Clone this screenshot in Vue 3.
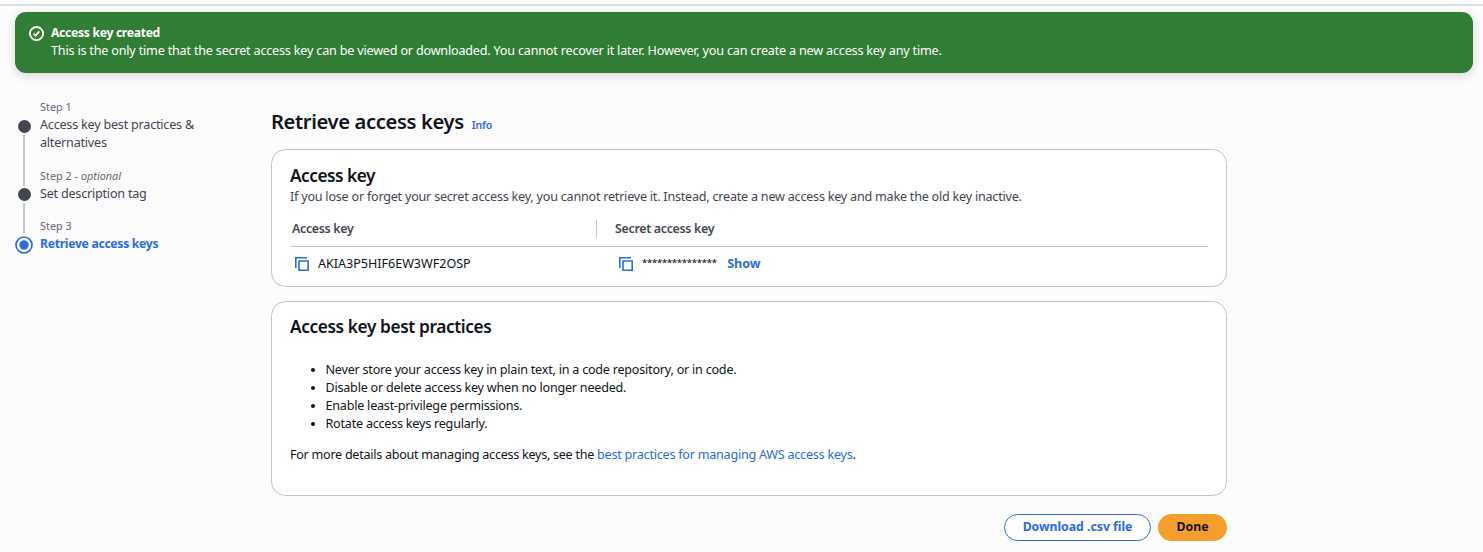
<script setup>
const steps = [
  { label: 'Step 1', title: 'Access key best practices & alternatives', state: 'done' },
  { label: 'Step 2', optional: 'optional', title: 'Set description tag', state: 'done' },
  { label: 'Step 3', title: 'Retrieve access keys', state: 'active' },
]
const practices = [
  'Never store your access key in plain text, in a code repository, or in code.',
  'Disable or delete access key when no longer needed.',
  'Enable least-privilege permissions.',
  'Rotate access keys regularly.',
]
</script>

<template>
  <div class="page">
    <div class="topbar"></div>
    <section class="flash">
      <svg class="flash-icon" viewBox="0 0 16 16" fill="none" stroke="#fff" stroke-width="2">
        <circle cx="8" cy="8" r="7" />
        <path d="M5 8.2l2.1 2.1L11 5.7" />
      </svg>
      <div>
        <div class="flash-title">Access key created</div>
        <div class="flash-text">This is the only time that the secret access key can be viewed or downloaded. You cannot recover it later. However, you can create a new access key any time.</div>
      </div>
    </section>

    <div class="layout">
      <nav class="steps">
        <div v-for="s in steps" :key="s.label" class="step" :class="s.state">
          <div class="rail">
            <svg v-if="s.state === 'active'" class="ring" viewBox="0 0 18 18">
              <circle cx="9" cy="9" r="8" fill="#fff" stroke="#2a6bdf" stroke-width="1.7" />
              <circle cx="9" cy="9" r="4.7" fill="#2a6bdf" />
            </svg>
            <span v-else class="dot"></span>
            <span v-if="s.state !== 'active'" class="line"></span>
          </div>
          <div class="step-body">
            <div class="step-label">{{ s.label }}<template v-if="s.optional"> - <i>{{ s.optional }}</i></template></div>
            <div class="step-title">{{ s.title }}</div>
          </div>
        </div>
      </nav>

      <main class="main">
        <header class="heading">
          <h1>Retrieve access keys</h1>
          <a class="info">Info</a>
        </header>

        <section class="card keys">
          <h2>Access key</h2>
          <p class="desc">If you lose or forget your secret access key, you cannot retrieve it. Instead, create a new access key and make the old key inactive.</p>
          <div class="row head">
            <div class="cell first">Access key</div>
            <div class="cell">Secret access key</div>
          </div>
          <div class="row body">
            <div class="cell first">
              <svg class="copy" viewBox="0 0 14 14" fill="none" stroke="#2a6bdf" stroke-width="1.6">
                <path d="M.8 11V.8H12" /><path d="M4 4h9.2v9.2H4z" />
              </svg>
              <span class="key">AKIA3P5HIF6EW3WF2OSP</span>
            </div>
            <div class="cell">
              <svg class="copy" viewBox="0 0 14 14" fill="none" stroke="#2a6bdf" stroke-width="1.6">
                <path d="M.8 11V.8H12" /><path d="M4 4h9.2v9.2H4z" />
              </svg>
              <span class="stars">***************</span>
              <a class="show">Show</a>
            </div>
          </div>
        </section>

        <section class="card practices">
          <h2>Access key best practices</h2>
          <ul>
            <li v-for="p in practices" :key="p">{{ p }}</li>
          </ul>
          <p class="more">For more details about managing access keys, see the <a>best practices for managing AWS access keys</a>.</p>
        </section>

        <footer class="actions">
          <button class="btn outline">Download .csv file</button>
          <button class="btn primary">Done</button>
        </footer>
      </main>
    </div>
  </div>
</template>

<style>
body { background: #fcfcfd; }
</style>

<style scoped>
.page {
  box-sizing: border-box;
  height: 552px;
  overflow: hidden;
  font: 12.6px/18px "Noto Sans", "Open Sans", sans-serif;
  letter-spacing: -0.2px;
  color: #0f141a;
  background: #fcfcfd;
}
h1, h2, p, ul { margin: 0; padding: 0; }
.topbar { box-sizing: border-box; height: 6px; background: #fff; border-bottom: 2px solid #dedee3; }
.flash {
  box-sizing: border-box;
  display: flex;
  height: 61px;
  margin: 6.4px 10px 0 15px;
  padding: 11.6px 14px;
  border-radius: 11px;
  background: #327d36;
  color: #fff;
  box-shadow: 0 3px 8px 1px rgba(0, 7, 22, 0.12);
}
.flash-icon { width: 15px; height: 15px; margin: 2px 7px 0 0; flex: none; }
.flash-title { font-size: 12.2px; font-weight: 700; letter-spacing: -0.32px; }
.flash-text { letter-spacing: -0.193px; }
.layout { display: flex; }
.steps { width: 271px; padding: 25px 0 0 15px; flex: none; box-sizing: border-box; }
.step { display: flex; }
.rail { width: 18px; margin-right: 7px; display: flex; flex-direction: column; align-items: center; padding-top: 22px; flex: none; }
.dot { width: 13px; height: 13px; border-radius: 50%; background: #424650; flex: none; }
.line { width: 2px; flex: 1; background: #c6c6cd; margin: 2px 0 -19px; }
.step + .step .rail { padding-top: 21px; }
.step + .step .line { margin-bottom: -16px; }
.step.active .rail { padding-top: 18.5px; }
.ring { width: 18px; height: 18px; flex: none; }
.step-body { width: 170px; padding-bottom: 14.5px; }
.step-label { font-size: 10.8px; color: #656871; letter-spacing: 0.03px; }
.step-title { color: #424650; letter-spacing: -0.22px; }
.active .step-title { color: #2a6bdf; font-weight: 700; font-size: 12.2px; letter-spacing: -0.3px; }
.main { width: 956px; padding-top: 34px; }
.heading { display: flex; align-items: baseline; height: 42px; gap: 8px; }
h1 { font-size: 20.2px; line-height: 29px; font-weight: 650; letter-spacing: -0.38px; }
.info { font-size: 10.6px; font-weight: 600; letter-spacing: -0.2px; color: #2a6bdf; }
.card { box-sizing: border-box; border: 1px solid #c3c3ca; border-radius: 14.4px; background: #fff; padding: 0 18px; }
.keys { height: 138px; padding-top: 15px; }
h2 { font-size: 17.3px; line-height: 22px; font-weight: 650; letter-spacing: -0.4px; }
.keys h2 { letter-spacing: -0.5px; }
.desc { margin-top: 1px; color: #424650; letter-spacing: -0.23px; }
.row { display: flex; align-items: center; }
.row .cell { display: flex; align-items: center; }
.head { height: 34px; margin-top: 6px; border-bottom: 1px solid #c3c3ca; color: #424650; font-size: 12.4px; font-weight: 650; letter-spacing: -0.3px; padding-left: 2px; }
.head .first { box-sizing: border-box; width: 305px; height: 18px; border-right: 1px solid #c3c3ca; margin-right: 18px; }
.body { height: 34px; padding-left: 5px; }
.body .first { width: 324px; }
.copy { width: 14px; height: 14px; margin: 0 9px 0 0; }
.key { letter-spacing: -0.03px; }
.stars { font-size: 9.5px; letter-spacing: -0.23px; line-height: 17px; padding-bottom: 4px; font-weight: 500; }
.show { margin-left: 10.5px; color: #2a6bdf; font-weight: 700; letter-spacing: -0.05px; }
.practices { height: 195px; margin-top: 14px; padding-top: 14px; }
ul { margin-top: 23px; padding-left: 35.5px; letter-spacing: -0.23px; }
.more { margin-top: 13px; letter-spacing: -0.275px; }
.more a { color: #2a6bdf; letter-spacing: -0.24px; }
.actions { display: flex; justify-content: flex-end; gap: 7px; margin-top: 18px; }
.btn { box-sizing: border-box; height: 27px; padding: 0 0 2px; border-radius: 14px; font: 700 12.3px/18px "Noto Sans", "Open Sans", sans-serif; letter-spacing: -0.03px; }
.outline { width: 147px; border: 1.5px solid #2a6bdf; background: #fff; color: #2a6bdf; }
.primary { width: 69px; border: 0; background: #f59e2d; color: #0f141a; }
</style>
